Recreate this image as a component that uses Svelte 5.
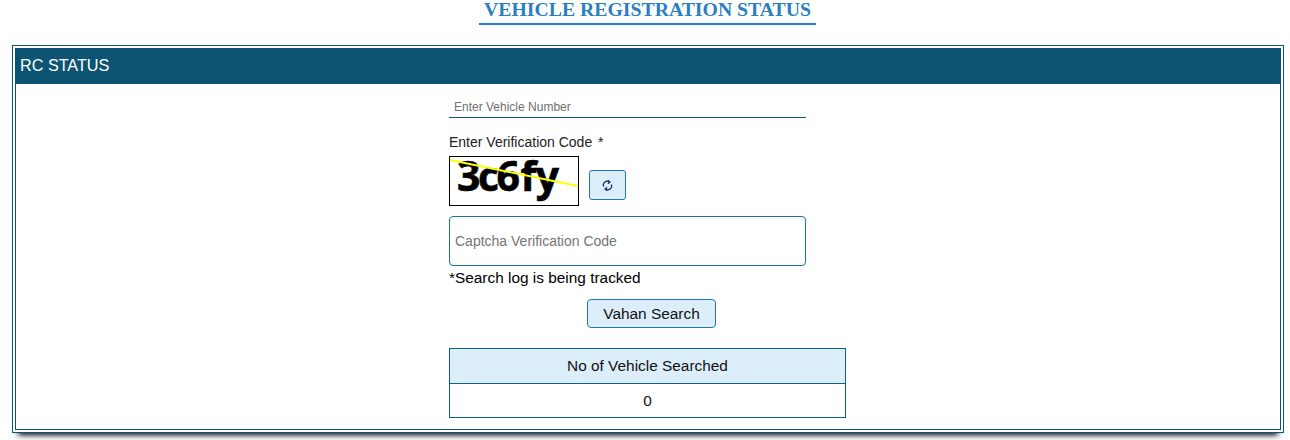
<script>
	let vehicleNumber = '';
	let captcha = '';
	let searched = 0;
</script>

<div class="page">
	<div class="title-row">
		<h1 class="title">VEHICLE REGISTRATION STATUS</h1>
	</div>

	<div class="panel">
		<div class="panel-inner">
			<div class="panel-head">RC STATUS</div>
			<div class="panel-body">
				<input class="vehicle" type="text" placeholder="Enter Vehicle Number" bind:value={vehicleNumber} />

				<div class="code-label">Enter Verification Code <span class="star">*</span></div>
				<div class="captcha-row">
					<div class="captcha">
						<span class="captcha-text"><span class="tight">3c6</span>fy</span>
						<svg class="captcha-line" viewBox="0 0 128 48" width="128" height="48">
							<line x1="0" y1="3" x2="128" y2="29" stroke="#ffff00" stroke-width="2" />
						</svg>
					</div>
					<button class="refresh" type="button" aria-label="Refresh">
						<svg viewBox="0 0 16 16" width="11" height="11" fill="none" stroke="#0c2a5a" stroke-width="1.8">
							<path d="M2.5 9.5A5.5 5.5 0 0 1 11 3" />
							<path d="M13.5 6.5A5.5 5.5 0 0 1 5 13" />
							<path d="M8.5 0.5L11.5 3L8.5 5.5" />
							<path d="M7.5 10.5L4.5 13L7.5 15.5" />
						</svg>
					</button>
				</div>

				<input class="code-input" type="text" placeholder="Captcha Verification Code" bind:value={captcha} />
				<div class="note">*Search log is being tracked</div>

				<button class="search" type="button">Vahan Search</button>

				<table class="count">
					<thead>
						<tr><th>No of Vehicle Searched</th></tr>
					</thead>
					<tbody>
						<tr><td>{searched}</td></tr>
					</tbody>
				</table>
			</div>
		</div>
	</div>
</div>

<style>
	:global(body) {
		margin: 0;
		background: #fff;
		font-family: "Liberation Sans", Arial, sans-serif;
	}
	.page {
		height: 440px;
		overflow: hidden;
	}
	.title-row {
		display: flex;
		justify-content: center;
		padding-left: 5px;
		height: 45px;
	}
	.title {
		margin: 0;
		height: 25px;
		box-sizing: border-box;
		padding: 0 5px;
		border-bottom: 2px solid #2a7fc1;
		font-family: "Liberation Serif", "Times New Roman", serif;
		font-size: 19.75px;
		font-weight: bold;
		line-height: 19px;
		color: #2a7fc1;
	}
	.panel {
		margin: 0 6px 0 12px;
		height: 388px;
		box-sizing: border-box;
		border: 1px solid #0d5472;
		padding: 2px;
		box-shadow: 0 8px 6px -6px #000;
		background: #fff;
	}
	.panel-inner {
		height: 100%;
		box-sizing: border-box;
		border: 1px solid #0d5472;
		border-top: 0;
	}
	.panel-head {
		height: 36px;
		margin-left: -1px;
		margin-right: -1px;
		padding-left: 5px;
		background: #0d5472;
		color: #fff;
		font-size: 16.2px;
		line-height: 35px;
	}
	.panel-body {
		margin-left: 433px;
		width: 397px;
		display: flex;
		flex-direction: column;
		align-items: flex-start;
		padding-top: 12px;
	}
	.vehicle {
		width: 357px;
		height: 22px;
		box-sizing: border-box;
		border: 0;
		border-bottom: 1px solid #0d5472;
		padding: 0 5px;
		font-family: inherit;
		font-size: 12px;
		outline: none;
	}
	.vehicle::placeholder {
		color: #6f6f6f;
		opacity: 1;
	}
	.code-label {
		margin-top: 16px;
		height: 22px;
		font-size: 14px;
		line-height: 17px;
		color: #222;
	}
	.star {
		margin-left: 2px;
	}
	.captcha-row {
		display: flex;
		align-items: flex-end;
		gap: 10px;
	}
	.captcha {
		position: relative;
		width: 130px;
		height: 50px;
		box-sizing: border-box;
		border: 1px solid #000;
		background: #fff;
	}
	.captcha-text {
		display: block;
		padding-left: 7px;
		font-family: "Open Sans", sans-serif;
		font-size: 41px;
		font-weight: bold;
		line-height: 36px;
		letter-spacing: -0.5px;
		color: #000;
		-webkit-text-stroke: 0.6px #000;
	}
	.tight {
		letter-spacing: -2.5px;
		margin-right: 3px;
	}
	.captcha-line {
		position: absolute;
		left: 0;
		top: 0;
	}
	.refresh {
		display: flex;
		align-items: center;
		justify-content: center;
		width: 37px;
		height: 30px;
		margin-bottom: 6px;
		padding: 0;
		border: 1px solid #1f78ad;
		border-radius: 3px;
		background: #ddeefb;
	}
	.code-input {
		margin-top: 10px;
		width: 357px;
		height: 50px;
		box-sizing: border-box;
		border: 1px solid #1f6f9c;
		border-radius: 4px;
		padding: 0 5px;
		font-family: inherit;
		font-size: 14px;
		outline: none;
	}
	.code-input::placeholder {
		color: #757575;
		opacity: 1;
	}
	.note {
		margin-top: 3px;
		height: 18px;
		font-size: 15.4px;
		line-height: 18px;
		color: #000;
	}
	.search {
		margin: 12px 0 0 138px;
		width: 129px;
		height: 29px;
		padding: 0;
		border: 1px solid #1f78ad;
		border-radius: 4px;
		background: #ddeefb;
		font-family: inherit;
		font-size: 15.4px;
		color: #111;
	}
	.count {
		margin-top: 20px;
		width: 397px;
		border-collapse: collapse;
		font-size: 15.4px;
		color: #111;
	}
	.count th,
	.count td {
		border: 1px solid #0d5f86;
		padding: 0;
		text-align: center;
		font-weight: normal;
	}
	.count th {
		height: 34px;
		background: #ddeefb;
	}
	.count td {
		height: 33px;
	}
</style>
